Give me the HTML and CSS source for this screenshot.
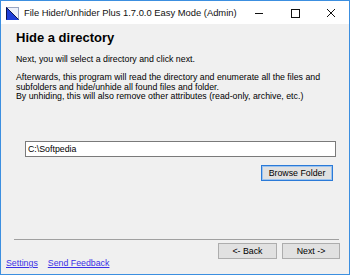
FILE: index.html
```html
<!DOCTYPE html>
<html lang="en">
<head>
    <meta charset="UTF-8">
    <meta name="viewport" content="width=device-width, initial-scale=1.0">
    <title>File Hider/Unhider Plus</title>
    <link rel="stylesheet" href="styles.css">
</head>
<body>
    <div class="window">
        <header class="titlebar">
            <svg class="app-icon" width="13" height="13" viewBox="0 0 13 13">
                <rect x="0.5" y="0.5" width="12" height="12" fill="#eef2fb" stroke="#9aa6c2"/>
                <path d="M0 0 L13 13 L0 13 Z" fill="#1f3fd8"/>
                <path d="M0.5 0.5 L12.5 12.5 M0.5 0.5 L0.5 12.5" stroke="#0b1450" stroke-width="1"/>
            </svg>
            <span class="title">File Hider/Unhider Plus 1.7.0.0 Easy Mode (Admin)</span>
            <div class="controls">
                <span class="ctrl">
                    <svg width="10" height="10" viewBox="0 0 10 10"><path d="M1 5.5 H9" stroke="#111" stroke-width="1"/></svg>
                </span>
                <span class="ctrl">
                    <svg width="10" height="10" viewBox="0 0 10 10"><rect x="1.5" y="1.5" width="8" height="8" fill="none" stroke="#111" stroke-width="1"/></svg>
                </span>
                <span class="ctrl">
                    <svg width="10" height="10" viewBox="0 0 10 10"><path d="M1 1 L9 9 M9 1 L1 9" stroke="#111" stroke-width="1"/></svg>
                </span>
            </div>
        </header>

        <main class="content">
            <h1 class="heading">Hide a directory</h1>
            <p class="intro">Next, you will select a directory and click next.</p>
            <p class="details">Afterwards, this program will read the directory and enumerate all the files and<br>
                subfolders and hide/unhide all found files and folder.<br>
                By unhiding, this will also remove other attributes (read-only, archive, etc.)</p>

            <div class="path-field">C:\Softpedia</div>
            <div class="browse-row">
                <button class="btn btn-default">Browse Folder</button>
            </div>

            <footer class="footer">
                <div class="separator"></div>
                <div class="nav-row">
                    <button class="btn btn-back">&lt;- Back</button>
                    <button class="btn btn-next">Next -&gt;</button>
                </div>
                <div class="links">
                    <a href="#">Settings</a>
                    <a href="#">Send Feedback</a>
                </div>
            </footer>
        </main>
    </div>
</body>
</html>
```

FILE: styles.css
```css
:root{
    --cor-borda: #3c8fe0;
    --cor-fundo: #f0f0f0;
    --cor-botao: #e1e1e1;
    --cor-link: #3a2fe6;

    --font-ui: "Liberation Sans", Arial, sans-serif;
}

*{
    margin: 0px;
    padding: 0px;
    box-sizing: border-box;
}

body{
    background-color: white;
    font-family: var(--font-ui);
}

.window{
    width: 350px;
    height: 275px;
    border: 1px solid var(--cor-borda);
    display: flex;
    flex-direction: column;
}

.titlebar{
    height: 23px;
    background-color: white;
    display: flex;
    align-items: center;
}

.app-icon{
    margin-left: 5px;
    margin-top: 1px;
    flex-shrink: 0;
}

.title{
    margin-left: 5px;
    font-size: 9.4px;
    white-space: nowrap;
    color: #111;
}

.controls{
    margin-left: auto;
    display: flex;
    height: 100%;
}

.ctrl{
    width: 36px;
    display: flex;
    align-items: center;
    justify-content: center;
}

.content{
    flex: 1;
    background-color: var(--cor-fundo);
    padding: 0px 15px;
    display: flex;
    flex-direction: column;
    font-size: 8.8px;
    color: black;
}

.heading{
    margin-top: 6px;
    font-size: 13px;
    line-height: 16px;
    font-weight: 700;
}

.intro{
    margin-top: 8px;
    line-height: 10px;
}

.details{
    margin-top: 9px;
    line-height: 9.5px;
}

.path-field{
    margin-top: 39px;
    margin-left: 9px;
    width: 311px;
    height: 16px;
    background-color: white;
    border: 1px solid #7a7a7a;
    padding-left: 2px;
    line-height: 14px;
}

.browse-row{
    margin-top: 8px;
    display: flex;
    justify-content: flex-end;
    padding-right: 1px;
}

.btn{
    font-family: var(--font-ui);
    font-size: 8.8px;
    color: black;
    height: 16px;
    background-color: var(--cor-botao);
    border: 1px solid #adadad;
}

.btn-default{
    width: 72px;
    border: 1px solid #2a7ad8;
    box-shadow: inset 0 0 0 1px #9cc3ee;
}

.footer{
    margin-top: auto;
    margin-left: -2px;
    margin-right: -10px;
    padding-bottom: 6px;
    display: flex;
    flex-direction: column;
}

.separator{
    height: 1px;
    background-color: #a0a0a0;
    margin-right: 5px;
}

.nav-row{
    margin-top: 3px;
    display: flex;
    justify-content: flex-end;
    gap: 5px;
    padding-right: 4px;
}

.btn-back{
    width: 59px;
}

.btn-next{
    width: 58px;
}

.links{
    margin-top: -1px;
    margin-left: -8px;
    display: flex;
    gap: 10px;
    line-height: 10px;
}

.links a{
    color: var(--cor-link);
}
```
